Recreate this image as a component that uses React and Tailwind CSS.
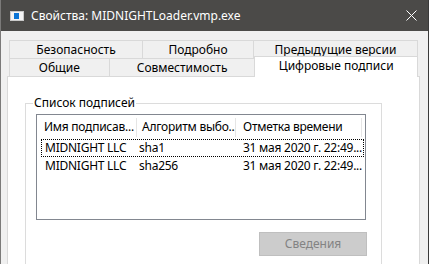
import React from 'react';

const font = { fontFamily: '"Noto Sans", "Open Sans", sans-serif' };

function TitleIcon() {
  return (
    <svg width="14" height="10" viewBox="0 0 14 10" className="shrink-0">
      <rect x="0" y="0" width="14" height="10" fill="#c9c9c9" />
      <rect x="1" y="1" width="12" height="8" fill="#f4f4f4" />
      <rect x="4" y="2" width="5" height="6" fill="#0a74d6" />
    </svg>
  );
}

function CloseIcon() {
  return (
    <svg width="11" height="11" viewBox="0 0 11 11">
      <path d="M0.5 0.5 L10.5 10.5 M10.5 0.5 L0.5 10.5" stroke="#ffffff" strokeWidth="1" fill="none" />
    </svg>
  );
}

export default function App() {
  return (
    <div
      className="w-[429px] h-[264px] overflow-hidden flex flex-col bg-[#f0f0f0] border-l border-l-[#7b7a79] border-r border-r-[#3a3a3a] text-[12px] text-black whitespace-nowrap"
      style={font}
    >
      {/* Title bar */}
      <div className="h-[31px] shrink-0 bg-[#4b4a48] flex items-center pl-[9px] pr-[11px]">
        <TitleIcon />
        <span className="ml-[7px] text-white text-[12px] leading-none">Свойства: MIDNIGHTLoader.vmp.exe</span>
        <div className="ml-auto flex items-center">
          <CloseIcon />
        </div>
      </div>

      {/* Body */}
      <div className="flex-1 flex flex-col pl-[6px] pr-[8px] pt-[9px]">
        {/* Tabs */}
        <div className="px-[2px] flex flex-col">
          <div className="flex h-[18px]">
            <div className="w-[133px] border-t border-l border-[#d9d9d9] flex items-center justify-center leading-none">Безопасность</div>
            <div className="w-[111px] border-t border-l border-[#d9d9d9] flex items-center justify-center leading-none">Подробно</div>
            <div className="w-[165px] border-t border-l border-r border-[#d9d9d9] flex items-center justify-center leading-none">Предыдущие версии</div>
          </div>
          <div className="flex h-[18px] items-start">
            <div className="w-[100px] h-[18px] border-t border-l border-[#d9d9d9] flex items-center justify-center leading-none">Общие</div>
            <div className="w-[146px] h-[18px] border-t border-l border-[#d9d9d9] flex items-center justify-center leading-none">Совместимость</div>
            <div className="relative z-10 w-[164px] h-[21px] -mt-[2px] bg-white border-t border-l border-r border-[#d9d9d9] flex items-start justify-center pt-[2px] leading-none">
              <span className="pt-[1px]">Цифровые подписи</span>
            </div>
          </div>
        </div>

        {/* Panel */}
        <div className="flex-1 bg-white border border-[#d9d9d9] pl-[17px]">
          <fieldset className="mt-[18px] w-[357px] h-[200px] border border-[#dcdcdc] pb-0">
            <legend className="ml-[7px] px-[1px] leading-[16px]">Список подписей</legend>

            <div className="mt-[3px] ml-[10px] w-[330px] h-[106px] border border-[#828790] bg-white flex flex-col tracking-[-0.25px]">
              {/* Header */}
              <div className="h-[24px] flex items-center text-black">
                <div className="w-[100px] h-[19px] flex items-center pl-[7px] border-r border-[#e5e5e5] overflow-hidden">Имя подписав...</div>
                <div className="w-[99px] h-[19px] flex items-center pl-[5px] border-r border-[#e5e5e5] overflow-hidden">Алгоритм выбо...</div>
                <div className="w-[126px] h-[19px] flex items-center pl-[7px] border-r border-[#e5e5e5] overflow-hidden">Отметка времени</div>
              </div>
              {/* Rows */}
              <div className="pl-[4px] flex flex-col">
                <div className="w-[323px] h-[18px] border border-dotted border-black flex items-center">
                  <div className="w-[95px] pl-[3px]">MIDNIGHT LLC</div>
                  <div className="w-[100px] pl-[2px]">sha1</div>
                  <div className="pl-[6px]">31 мая 2020 г. 22:49...</div>
                </div>
                <div className="w-[323px] h-[17px] border border-transparent flex items-center">
                  <div className="w-[95px] pl-[3px]">MIDNIGHT LLC</div>
                  <div className="w-[100px] pl-[2px]">sha256</div>
                  <div className="pl-[6px]">31 мая 2020 г. 22:49...</div>
                </div>
              </div>
            </div>

            <div className="mt-[12px] ml-[233px] w-[108px] h-[24px] bg-[#cccccc] border border-[#bfbfbf] flex items-center justify-center text-[#838383]">
              Сведения
            </div>
          </fieldset>
        </div>
      </div>
    </div>
  );
}
